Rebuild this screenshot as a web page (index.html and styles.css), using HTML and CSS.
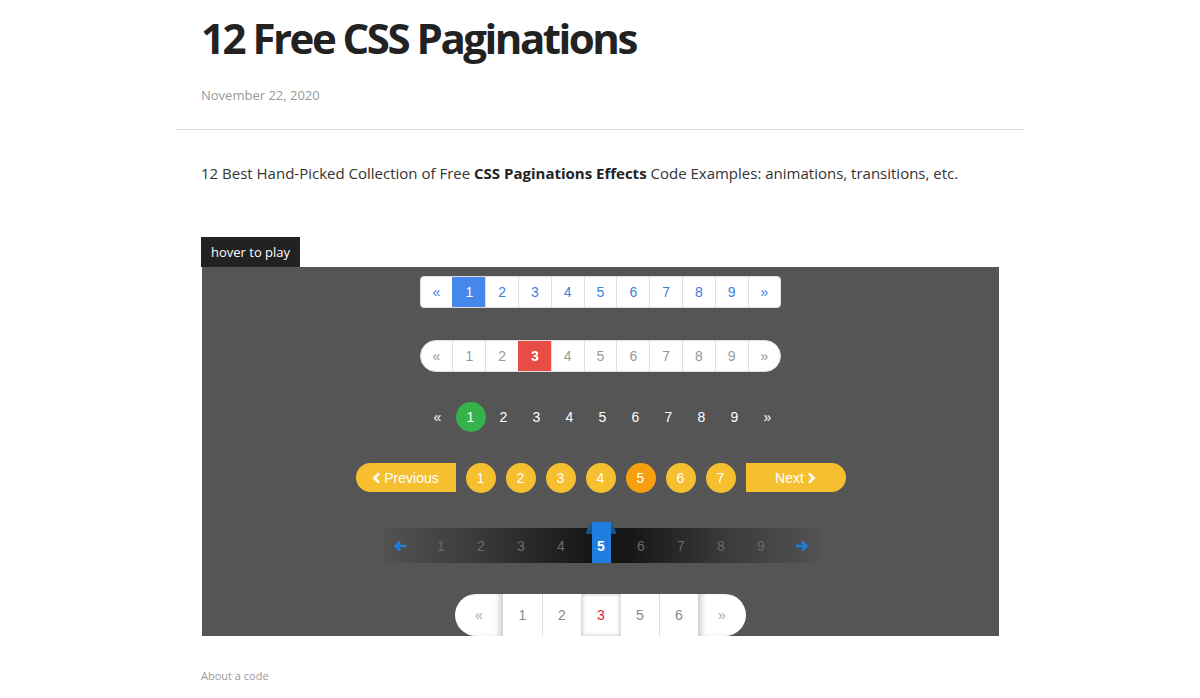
FILE: index.html
```html
<!DOCTYPE html>
<html>
<head>
<meta charset="utf-8">
<link rel="stylesheet" href="styles.css">
</head>
<body>
<div class="page">
  <header class="head">
    <h1 class="title">12 Free CSS Paginations</h1>
    <div class="date">November 22, 2020</div>
  </header>
  <hr class="rule">
  <div class="content">
    <p class="intro">12 Best Hand-Picked Collection of Free <strong>CSS Paginations Effects</strong> Code Examples: animations, transitions, etc.</p>
    <div class="tag">hover to play</div>
    <div class="demo">
      <div class="row r1">
        <ul class="pg pg1">
          <li>&laquo;</li><li class="on">1</li><li>2</li><li>3</li><li>4</li><li>5</li><li>6</li><li>7</li><li>8</li><li>9</li><li>&raquo;</li>
        </ul>
      </div>
      <div class="row r2">
        <ul class="pg pg2">
          <li>&laquo;</li><li>1</li><li>2</li><li class="on">3</li><li>4</li><li>5</li><li>6</li><li>7</li><li>8</li><li>9</li><li>&raquo;</li>
        </ul>
      </div>
      <div class="row r3">
        <ul class="pg3">
          <li>&laquo;</li><li class="on">1</li><li>2</li><li>3</li><li>4</li><li>5</li><li>6</li><li>7</li><li>8</li><li>9</li><li>&raquo;</li>
        </ul>
      </div>
      <div class="row r4">
        <div class="pg4">
          <span class="btn prev"><svg class="chev" viewBox="0 0 10 14" width="9" height="12"><path d="M8 1.5 L2.5 7 L8 12.5" fill="none" stroke="#fff" stroke-width="3"/></svg>Previous</span>
          <span class="dot">1</span><span class="dot">2</span><span class="dot">3</span><span class="dot">4</span><span class="dot on">5</span><span class="dot">6</span><span class="dot">7</span>
          <span class="btn next">Next<svg class="chev" viewBox="0 0 10 14" width="9" height="12"><path d="M2 1.5 L7.5 7 L2 12.5" fill="none" stroke="#fff" stroke-width="3"/></svg></span>
        </div>
      </div>
      <div class="row r5">
        <div class="bar">
          <span class="it arrow"><svg viewBox="0 0 14 12" width="13" height="12"><path d="M6.5 1.2 L1.8 6 L6.5 10.8 M2 6 H13" fill="none" stroke="#1e7fe0" stroke-width="2.8"/></svg></span>
          <span class="it">1</span><span class="it">2</span><span class="it">3</span><span class="it">4</span><span class="it on"><span class="cap"></span><span class="num">5</span></span><span class="it">6</span><span class="it">7</span><span class="it">8</span><span class="it">9</span>
          <span class="it arrow"><svg viewBox="0 0 14 12" width="13" height="12"><path d="M7.5 1.2 L12.2 6 L7.5 10.8 M12 6 H1" fill="none" stroke="#1e7fe0" stroke-width="2.8"/></svg></span>
        </div>
      </div>
      <div class="row r6">
        <ul class="pg6">
          <li class="end l">&laquo;</li><li>1</li><li>2</li><li class="on">3</li><li>5</li><li>6</li><li class="end r">&raquo;</li>
        </ul>
      </div>
    </div>
    <div class="about">About a code</div>
  </div>
</div>
</body>
</html>
```

FILE: styles.css
```css
* { box-sizing: border-box; }
html, body { margin: 0; padding: 0; background: #fff; }
body { font-family: "Open Sans", "Liberation Sans", sans-serif; color: #333; }

.page { width: 850px; margin: 0 auto; padding-left: 1px; }

.head { padding: 12px 25px 0; }
.title {
  margin: 0;
  font-size: 42px;
  line-height: 52px;
  font-weight: 700;
  color: #222;
  letter-spacing: -2.5px;
}
.date {
  margin-top: 21px;
  font-size: 13px;
  line-height: 20px;
  color: #999;
}
.rule {
  margin: 24px 0 0;
  border: 0;
  border-top: 1px solid #ddd;
  height: 0;
}

.content { padding: 0 25px; }
.intro {
  margin: 31px 0 0;
  font-size: 15px;
  line-height: 24px;
  color: #333;
}
.intro strong { font-weight: 700; color: #222; }

.tag {
  display: block;
  width: fit-content;
  margin-top: 52px;
  background: #222;
  color: #fff;
  font-size: 13px;
  line-height: 20px;
  height: 30px;
  padding: 5px 10px 5px 10px;
}

.demo {
  margin-left: 1px;
  width: 797px;
  height: 369px;
  background: #555;
  padding-top: 9px;
  overflow: hidden;
  display: flex;
  flex-direction: column;
  align-items: center;
}
.row { display: flex; justify-content: center; width: 100%; flex: none; }
.r1 { height: 32px; }
.r2 { height: 32px; margin-top: 32px; }
.r3 { height: 30px; margin-top: 30px; }
.r4 { height: 29px; margin-top: 31px; }
.r5 { height: 41px; margin-top: 30px; }
.r6 { height: 42px; margin-top: 31px; }

ul { list-style: none; margin: 0; padding: 0; }

.pg {
  display: flex;
  background: #fff;
  border: 1px solid #ddd;
  overflow: hidden;
  font-family: "Liberation Sans", Arial, sans-serif;
  font-size: 14px;
}
.pg li {
  width: 32.8px;
  height: 30px;
  line-height: 30px;
  text-align: center;
  border-left: 1px solid #ddd;
}
.pg li:first-child { border-left: 0; width: 31.8px; }
.pg1 { border-radius: 4px; }
.pg1 li { color: #3d7fd8; }
.pg1 li.on { background: #4687ec; color: #fff; border-left-color: #4687ec; }
.pg2 { border-radius: 16px; }
.pg2 li { color: #999; }
.pg2 li.on { background: #e84c44; color: #fff; font-weight: 700; border-left-color: #e84c44; }

.pg3 {
  display: flex;
  margin-left: 4px;
  font-family: "Liberation Sans", Arial, sans-serif;
  font-size: 14px;
  color: #fff;
}
.pg3 li {
  width: 33px;
  height: 30px;
  line-height: 30px;
  text-align: center;
}
.pg3 li.on {
  width: 30px;
  margin: 0 1.5px;
  border-radius: 50%;
  background: #35b24a;
}

.pg4 {
  display: flex;
  align-items: center;
  gap: 10px;
  font-family: "Liberation Sans", Arial, sans-serif;
  font-size: 14px;
  color: #fff;
}
.btn {
  width: 100px;
  height: 29px;
  display: flex;
  align-items: center;
  justify-content: center;
  gap: 3px;
  background: #f5bf30;
}
.prev { border-radius: 15px 0 0 15px; }
.next { border-radius: 0 15px 15px 0; }
.chev { display: block; }
.dot {
  width: 30px;
  height: 30px;
  border-radius: 50%;
  background: #f5bf30;
  display: flex;
  align-items: center;
  justify-content: center;
}
.dot.on { background: #f89f10; }

.r5 { align-items: flex-end; }
.bar {
  width: 435px;
  height: 35px;
  margin-left: 1px;
  display: flex;
  align-items: flex-end;
  justify-content: center;
  background: linear-gradient(to right, rgba(40,40,40,0.08) 0%, rgba(30,30,30,0.45) 20%, #161616 47%, #161616 56%, rgba(30,30,30,0.45) 80%, rgba(40,40,40,0.08) 100%);
  font-family: "Liberation Sans", Arial, sans-serif;
  font-size: 14px;
  color: #6a6a6a;
}
.it {
  width: 40px;
  height: 35px;
  display: flex;
  align-items: center;
  justify-content: center;
  flex: none;
}
.it.arrow { width: 41px; }
.it.arrow svg { display: block; }
.it.on {
  position: relative;
  height: 41px;
  align-items: flex-end;
}
.it.on .cap {
  position: absolute;
  left: 5px;
  top: 0;
  width: 30px;
  height: 12px;
  border-radius: 15px 15px 0 0;
  background: #1b5387;
}
.it.on .num {
  position: relative;
  width: 19px;
  height: 41px;
  background: #1f7fe0;
  color: #fff;
  font-weight: 700;
  display: flex;
  align-items: center;
  justify-content: center;
  padding-top: 6px;
}

.pg6 {
  display: flex;
  height: 42px;
  background: #fff;
  border-radius: 21px;
  overflow: hidden;
  font-family: "Liberation Sans", Arial, sans-serif;
  font-size: 14px;
  color: #888;
}
.pg6 li {
  width: 39px;
  line-height: 42px;
  text-align: center;
  border-left: 1px solid #ddd;
}
.pg6 li.end { width: 48px; border-left: 0; color: #aaa; }
.pg6 li.end.l { box-shadow: inset -6px 0 6px -3px rgba(0,0,0,0.22); }
.pg6 li.end.r { box-shadow: inset 6px 0 6px -3px rgba(0,0,0,0.22); }
.pg6 li.end.l + li { border-left: 0; }
.pg6 li.on {
  color: #d8263c;
  box-shadow: inset 0 0 4px rgba(0,0,0,0.25);
}

.about {
  margin-top: 32px;
  font-size: 11px;
  line-height: 16px;
  color: #999;
}
```
